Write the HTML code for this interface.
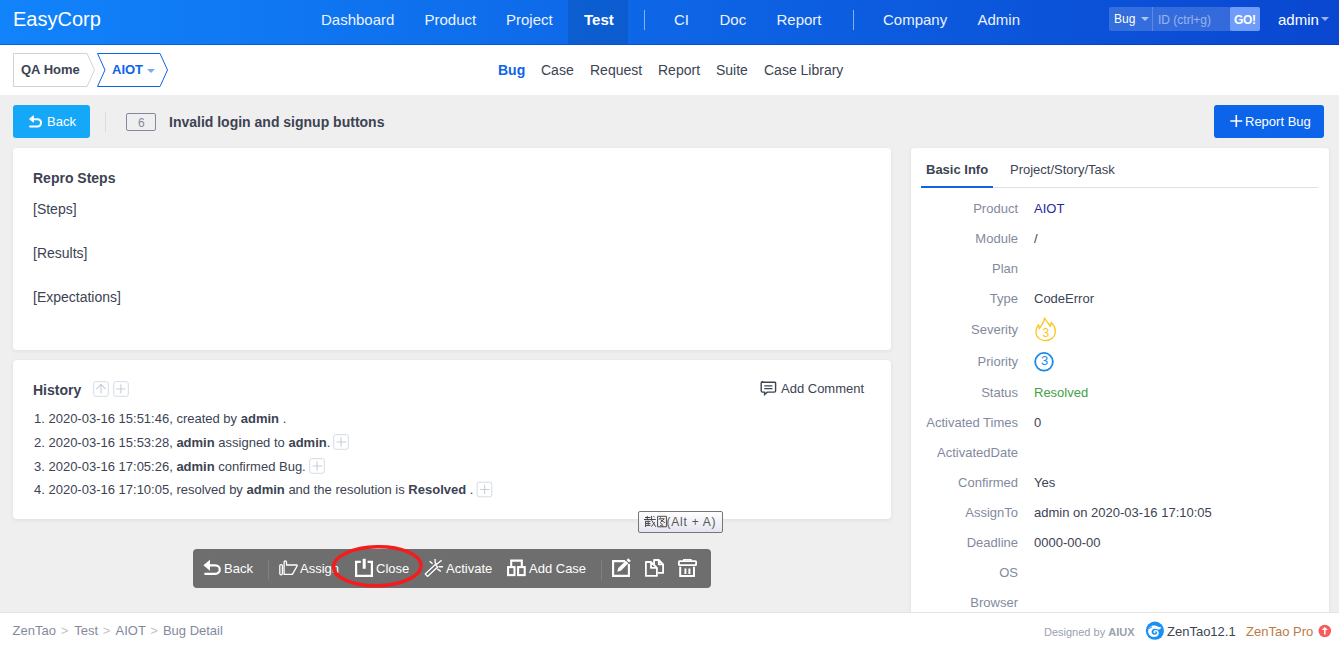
<!DOCTYPE html>
<html><head><meta charset="utf-8">
<style>
*{margin:0;padding:0;box-sizing:border-box}
html,body{width:1339px;height:649px;overflow:hidden;background:#efefef;font-family:"Liberation Sans",sans-serif;color:#3c4353;font-size:13px}
.a{position:absolute;white-space:nowrap;line-height:20px}
#hd{position:absolute;left:0;top:0;width:1339px;height:45px;background:linear-gradient(90deg,#1183fb 0%,#0a47d0 100%);border-bottom:1px solid rgba(0,40,180,.35)}
#hd .n{color:#fff;font-size:15px;opacity:.92}
#sub{position:absolute;left:0;top:45px;width:1339px;height:50px;background:#fff}
.panel{position:absolute;background:#fff;border-radius:4px;box-shadow:0 1px 4px rgba(0,0,0,.07)}
.lbl{color:#838a9d;text-align:right;width:110px;left:908px}
.val{left:1034px;color:#3c4353}
b{font-weight:bold}
</style></head><body>

<div id="hd">
  <div class="a" style="left:13px;top:7px;font-size:20px;line-height:24px;color:#fff">EasyCorp</div>
  <div style="position:absolute;left:568px;top:0;width:60px;height:44px;background:rgba(0,0,0,.1)"></div>
  <div class="a n" style="left:321px;top:10px">Dashboard</div>
  <div class="a n" style="left:424.5px;top:10px">Product</div>
  <div class="a n" style="left:506px;top:10px">Project</div>
  <div class="a" style="left:584px;top:10px;font-size:15px;font-weight:bold;color:#fff">Test</div>
  <div style="position:absolute;left:644px;top:10px;width:1px;height:20px;background:rgba(255,255,255,.5)"></div>
  <div class="a n" style="left:674px;top:10px">CI</div>
  <div class="a n" style="left:719.5px;top:10px">Doc</div>
  <div class="a n" style="left:776.5px;top:10px">Report</div>
  <div style="position:absolute;left:853px;top:10px;width:1px;height:20px;background:rgba(255,255,255,.5)"></div>
  <div class="a n" style="left:883px;top:10px">Company</div>
  <div class="a n" style="left:977.5px;top:10px">Admin</div>
  <!-- search -->
  <div style="position:absolute;left:1109px;top:7px;width:151px;height:24px;background:rgba(255,255,255,.17);border-radius:2px"></div>
  <div class="a" style="left:1114px;top:9px;font-size:12px;color:#fff">Bug</div>
  <div style="position:absolute;left:1141px;top:17px;width:0;height:0;border-left:4px solid transparent;border-right:4px solid transparent;border-top:4px solid rgba(255,255,255,.6)"></div>
  <div style="position:absolute;left:1152px;top:7px;width:1px;height:24px;background:rgba(255,255,255,.2)"></div>
  <div class="a" style="left:1158px;top:10px;font-size:12px;color:rgba(255,255,255,.5)">ID (ctrl+g)</div>
  <div style="position:absolute;left:1230px;top:7px;width:30px;height:24px;background:#6f9cf9;border-radius:2px"></div>
  <div class="a" style="left:1234px;top:10px;font-size:12px;font-weight:bold;color:#fff;letter-spacing:-.3px">GO!</div>
  <div class="a" style="left:1278px;top:10px;font-size:15px;color:#fff">admin</div>
  <div style="position:absolute;left:1321px;top:17px;width:0;height:0;border-left:4px solid transparent;border-right:4px solid transparent;border-top:4px solid rgba(255,255,255,.6)"></div>
</div>

<div id="sub">
  <svg style="position:absolute;left:0;top:0" width="180" height="50">
    <path d="M13.5 8.5 H87 L94.5 25 L87 41.5 H13.5 Z" fill="#fff" stroke="#cfd3dc" stroke-width="1"/>
    <path d="M97.5 8.5 H160 L167.5 25 L160 41.5 H97.5 L105 25 Z" fill="#fff" stroke="#0c64eb" stroke-width="1"/>
  </svg>
  <div class="a" style="left:21px;top:15px;font-weight:bold">QA Home</div>
  <div class="a" style="left:112px;top:15px;font-weight:bold;color:#0c64eb">AIOT</div>
  <div style="position:absolute;left:147px;top:24px;width:0;height:0;border-left:4px solid transparent;border-right:4px solid transparent;border-top:4px solid #7fa8f0"></div>
  <div class="a" style="left:498px;top:15px;font-size:14px;font-weight:bold;color:#0c64eb">Bug</div>
  <div class="a" style="left:541px;top:15px;font-size:14px">Case</div>
  <div class="a" style="left:590px;top:15px;font-size:14px">Request</div>
  <div class="a" style="left:658px;top:15px;font-size:14px">Report</div>
  <div class="a" style="left:716px;top:15px;font-size:14px">Suite</div>
  <div class="a" style="left:764px;top:15px;font-size:14px">Case Library</div>
</div>

<!-- main toolbar -->
<div style="position:absolute;left:13px;top:105px;width:77px;height:33px;background:#16a8f8;border-radius:3px"></div>
<div class="a" style="left:47px;top:112px;color:#fff">Back</div>
<div style="position:absolute;left:105px;top:112px;width:1px;height:20px;background:#dcdcdc"></div>
<div style="position:absolute;left:126px;top:113px;width:30px;height:18px;border:1px solid #838a9d;border-radius:2px"></div>
<div class="a" style="left:138px;top:113px;font-size:12px;color:#838a9d">6</div>
<div class="a" style="left:169px;top:112px;font-size:14px;font-weight:bold">Invalid login and signup buttons</div>

<div style="position:absolute;left:1214px;top:105px;width:110px;height:33px;background:#0c64eb;border-radius:3px"></div>
<div class="a" style="left:1245px;top:112px;color:#fff">Report Bug</div>

<!-- panel 1 -->
<div class="panel" style="left:13px;top:148px;width:878px;height:202px"></div>
<div class="a" style="left:33px;top:168px;font-size:14px;font-weight:bold">Repro Steps</div>
<div class="a" style="left:33px;top:199px;font-size:14px">[Steps]</div>
<div class="a" style="left:33px;top:243px;font-size:14px">[Results]</div>
<div class="a" style="left:33px;top:287px;font-size:14px">[Expectations]</div>

<!-- panel 2 -->
<div class="panel" style="left:13px;top:360px;width:878px;height:159px"></div>
<div class="a" style="left:33px;top:380px;font-size:14px;font-weight:bold">History</div>
<div class="a" style="left:781px;top:379px">Add Comment</div>
<div class="a" style="left:34px;top:409px">1. 2020-03-16 15:51:46, created by <b>admin</b> .</div>
<div class="a" style="left:34px;top:433px">2. 2020-03-16 15:53:28, <b>admin</b> assigned to <b>admin</b>.</div>
<div class="a" style="left:34px;top:457px">3. 2020-03-16 17:05:26, <b>admin</b> confirmed Bug.</div>
<div class="a" style="left:34px;top:480px">4. 2020-03-16 17:10:05, resolved by <b>admin</b> and the resolution is <b>Resolved</b> .</div>

<!-- right panel -->
<div class="panel" style="left:911px;top:148px;width:418px;height:470px"></div>
<div class="a" style="left:926px;top:160px;font-weight:bold">Basic Info</div>
<div class="a" style="left:1010px;top:160px">Project/Story/Task</div>
<div style="position:absolute;left:921px;top:187px;width:397px;height:1px;background:#dcdfe5"></div>
<div style="position:absolute;left:921px;top:186px;width:72px;height:2px;background:#0c64eb"></div>

<div class="a lbl" style="top:199px">Product</div><div class="a val" style="top:199px;color:#1f2a9a">AIOT</div>
<div class="a lbl" style="top:229px">Module</div><div class="a val" style="top:229px">/</div>
<div class="a lbl" style="top:259px">Plan</div>
<div class="a lbl" style="top:289px">Type</div><div class="a val" style="top:289px">CodeError</div>
<div class="a lbl" style="top:320px">Severity</div>
<div class="a lbl" style="top:352px">Priority</div>
<div class="a lbl" style="top:383px">Status</div><div class="a val" style="top:383px;color:#43a047">Resolved</div>
<div class="a lbl" style="top:413px">Activated Times</div><div class="a val" style="top:413px">0</div>
<div class="a lbl" style="top:443px">ActivatedDate</div>
<div class="a lbl" style="top:473px">Confirmed</div><div class="a val" style="top:473px">Yes</div>
<div class="a lbl" style="top:503px">AssignTo</div><div class="a val" style="top:503px">admin on 2020-03-16 17:10:05</div>
<div class="a lbl" style="top:533px">Deadline</div><div class="a val" style="top:533px">0000-00-00</div>
<div class="a lbl" style="top:563px">OS</div>
<div class="a lbl" style="top:593px">Browser</div>

<!-- action toolbar -->
<div style="position:absolute;left:193px;top:549px;width:518px;height:39px;background:#6e6e6e;border-radius:4px"></div>
<div class="a" style="left:224px;top:559px;color:#fff">Back</div>
<div class="a" style="left:300px;top:559px;color:#fff">Assign</div>
<div class="a" style="left:376px;top:559px;color:#fff">Close</div>
<div class="a" style="left:446px;top:559px;color:#fff">Activate</div>
<div class="a" style="left:529px;top:559px;color:#fff">Add Case</div>


<div style="position:absolute;left:0;top:612px;width:1339px;height:37px;background:#fff;border-top:1px solid #e5e5e5"></div>
<!-- icons -->
<svg style="position:absolute;left:0;top:0;pointer-events:none" width="1339" height="649">
  <!-- back btn icon -->
  <g fill="#fff" stroke="#fff">
    <path d="M28.9 119 L33.8 115.1 L33.8 123 Z" stroke="none"/>
    <path d="M33 119.2 H37.4 A3.65 3.65 0 0 1 37.4 126.5 H30.1" fill="none" stroke-width="2.1" stroke-linecap="round"/>
  </g>
  <!-- report bug plus -->
  <path d="M1236.3 115 V127 M1230.3 121 H1242.3" stroke="#fff" stroke-width="1.6"/>
  <!-- history box icons -->
  <rect x="93.7" y="381.7" width="14.6" height="14.6" rx="2" fill="none" stroke="#d5dbe6"/>
  <path d="M101 384.4 V393.6 M96.3 389.1 L101 384.4 L105.7 389.1" fill="none" stroke="#c6cedc" stroke-width="1.1"/>
  <rect x="113.7" y="381.7" width="14.6" height="14.6" rx="2" fill="none" stroke="#d5dbe6"/>
  <path d="M120.9 384.4 V393.6 M116.2 389 H125.6" fill="none" stroke="#c6cedc" stroke-width="1.1"/>
  <rect x="333.7" y="434.7" width="14.6" height="14.6" rx="2" fill="none" stroke="#d5dbe6"/>
  <path d="M341.1 437.2 V446.6 M336.6 442 H346" fill="none" stroke="#c6cedc" stroke-width="1.1"/>
  <rect x="309.7" y="458.7" width="14.6" height="14.6" rx="2" fill="none" stroke="#d5dbe6"/>
  <path d="M317.1 461.2 V470.6 M312.6 466 H322" fill="none" stroke="#c6cedc" stroke-width="1.1"/>
  <rect x="477.2" y="482.2" width="14.6" height="14.6" rx="2" fill="none" stroke="#d5dbe6"/>
  <path d="M484.6 484.7 V494.1 M480.1 489.5 H489.5" fill="none" stroke="#c6cedc" stroke-width="1.1"/>
  <!-- comment icon -->
  <g fill="none" stroke="#3c4353">
    <path d="M762.5 382.3 H774.3 Q775.6 381.8 775.6 383.1 V390.8 Q775.6 392.1 774.3 392.1 H767.3 L764.6 394.4 V392.1 H762.5 Q761.2 392.1 761.2 390.8 V383.1 Q761.2 381.8 762.5 381.8 Z" stroke-width="1.4"/>
    <path d="M764.3 385.9 H772.4 M764.3 388.7 H772.4" stroke-width="1.3"/>
  </g>
  <!-- severity flame -->
  <path d="M1044.6 317.9 C1045.8 321.2 1048.8 323.2 1050.4 326.5 L1051.2 322.5 C1053.8 325 1055.4 327.8 1055.4 331.8 C1055.4 336.8 1051 340.6 1045.5 340.6 C1040 340.6 1035.9 336.8 1035.9 332.3 C1035.9 329 1037 326.5 1038.6 324.6 L1039.3 328.6 C1041.8 325.2 1044 322.4 1044.6 317.9 Z" fill="none" stroke="#fcc41e" stroke-width="1.3" stroke-linejoin="round"/>
  <!-- priority circle -->
  <circle cx="1044" cy="361.8" r="8.85" fill="none" stroke="#1a8ae8" stroke-width="1.8"/>
  <!-- toolbar icons -->
  <g fill="#fff" stroke="#fff">
    <path d="M203.4 565.2 L210 559.8 L210 570.8 Z" stroke="none"/>
    <path d="M209 565.3 H215.5 A4.25 4.25 0 0 1 215.5 573.8 H205.2" fill="none" stroke-width="2.2" stroke-linecap="round"/>
    <!-- assign hand -->
    <rect x="279.8" y="564.6" width="2.6" height="10.2" rx="1.2" fill="none" stroke-width="1.3"/>
    <path d="M284.1 574.4 V561.9 Q284.1 560.9 285.3 560.9 Q286.5 560.9 286.5 561.9 V565 H296.6 Q297.6 565 297.1 566 L292.4 574.4 Z" fill="none" stroke-width="1.3" stroke-linejoin="round"/>
    <!-- close power -->
    <path d="M360.8 561.9 H356.1 V575.8 H371.9 V561.9 H367.6" fill="none" stroke-width="2.2"/>
    <path d="M364.2 558.8 V568.8" fill="none" stroke-width="3"/>
    <!-- activate wand -->
    <path d="M425.2 574 L435.3 564.6 L437.6 567 L427.5 576.4 Z" fill="none" stroke-width="1.3" stroke-linejoin="round"/>
    <path d="M435 562.6 L437.2 564.8 M435.1 559 V562.6 M429.6 561.2 L432.6 563.8 M437.3 563.8 L441.6 560.2 M438.6 566.8 H443 M437.2 568.8 L440.8 571.4" fill="none" stroke-width="1.4"/>
    <!-- add case sitemap -->
    <path d="M511.2 566 V560.6 H521.8 V566" fill="none" stroke-width="2.1"/>
    <rect x="508.1" y="567.1" width="6.4" height="8" fill="none" stroke-width="2.1"/>
    <rect x="518.1" y="567.1" width="6.6" height="8" fill="none" stroke-width="2.1"/>
    <!-- edit -->
    <path d="M625 561.1 H613.1 V575.9 H628.9 V564" fill="none" stroke-width="2.1"/>
    <path d="M617.2 571.8 L618.3 568.1 L625.8 560.7 L628.3 563.2 L620.9 570.7 Z" stroke="none"/>
    <path d="M626.5 559.9 L628.2 558.2 L630.8 560.8 L629.1 562.5 Z" stroke="none"/>
    <!-- copy -->
    <path d="M645.9 562 H651 L656.9 567.9 V575.9 H645.9 Z M651 562 V567.9 H656.9" fill="none" stroke-width="1.8" stroke-linejoin="round"/>
    <path d="M654.1 565.2 V560 H658.8 L663.1 564.3 V572.9 H657.8 M658.8 560 V564.3 H663.1" fill="none" stroke-width="1.8" stroke-linejoin="round"/>
    <!-- delete -->
    <rect x="678.9" y="561.1" width="17.2" height="4.1" rx="0.6" fill="none" stroke-width="1.8"/>
    <path d="M683.9 561 V559.7 H690.9 V561" fill="none" stroke-width="1.6"/>
    <path d="M680.2 566.8 V575.9 H694 V566.8" fill="none" stroke-width="2"/>
    <path d="M685.4 568.4 V574 M689.4 568.4 V574" fill="none" stroke-width="2"/>
  </g>
  <!-- separators -->
  <path d="M268.5 560 V580 M601.5 560 V580" stroke="#808080" stroke-width="1"/>
  <!-- red ellipse -->
  <ellipse cx="377.3" cy="566.2" rx="43.8" ry="19.5" fill="none" stroke="#f41c1c" stroke-width="3.5" transform="rotate(-1.2 377.3 566.2)"/>
  <!-- footer logos -->
  <circle cx="1154.9" cy="630.7" r="9.1" fill="#1a8ff4"/>
  <path d="M1148.2 630.5 C1148.6 627.4 1151.5 624.8 1155.2 625.6 C1157.4 626.1 1158.6 627.6 1161.4 627.2 C1160.6 629.2 1158.6 629.8 1157.2 629.3 C1155.5 628.3 1153.2 628.6 1152.1 630.2 C1150.9 632.3 1152.1 634.6 1154.5 634.8 C1156.5 635 1157.7 633.4 1157 632.1 C1156.4 631 1155 631.2 1154.8 632 C1155.8 632 1155.9 633.2 1155 633.3 C1153.8 633.5 1153.2 632.2 1153.6 631.2 C1154.4 629.8 1156.6 629.7 1157.8 630.7 C1159.5 632.2 1158.9 635.6 1156.3 636.6 C1152.8 637.9 1148.9 635.9 1148.2 632.5 Z" fill="#fff"/>
  <path d="M1149.5 629 C1150 627.6 1150.8 627 1152 627.2" fill="none" stroke="#1a8ff4" stroke-width="1"/>
  <circle cx="1324.8" cy="631" r="6.25" fill="#fa5a5a"/>
  <path d="M1324.8 626.9 L1327.9 629.9 H1325.6 V634.6 H1324 V629.9 H1321.7 Z" fill="#fff"/>
</svg>

<!-- footer -->

<div class="a" style="left:12.6px;top:621px;color:#838a9d">ZenTao</div>
<div class="a" style="left:60.8px;top:621px;color:#c4c4c4">&gt;</div>
<div class="a" style="left:74.2px;top:621px;color:#838a9d">Test</div>
<div class="a" style="left:102.7px;top:621px;color:#c4c4c4">&gt;</div>
<div class="a" style="left:115.5px;top:621px;color:#838a9d">AIOT</div>
<div class="a" style="left:150.2px;top:621px;color:#c4c4c4">&gt;</div>
<div class="a" style="left:162.9px;top:621px;color:#838a9d">Bug Detail</div>
<div class="a" style="left:1044px;top:622px;font-size:11px;color:#9aa0ae">Designed by <b>AIUX</b></div>
<div class="a" style="left:1167px;top:622px;color:#3c4353">ZenTao12.1</div>
<div class="a" style="left:1246px;top:622px;color:#b97c48">ZenTao Pro</div>
<div class="a" style="left:1041px;top:351px;color:#1a8ae8">3</div>
<div class="a" style="left:1042.5px;top:323px;font-size:12px;color:#fcc21e">3</div>
<div style="position:absolute;left:638px;top:511px;width:85px;height:22px;border:1px solid #767676;border-radius:2px;background:linear-gradient(#fff,#e4e5f0)"></div>
<div class="a" style="left:666.6px;top:512px;font-size:12px;color:#575757;letter-spacing:.75px">(Alt + A)</div>
<svg style="position:absolute;left:0;top:0" width="680" height="540"><g fill="none" stroke="#4a4a4a" stroke-width="1">
<path d="M645 517.5 H650.5 M644 519.5 H655.8 M647.3 516 V519.5 M651.6 515.8 V519.5 M645.6 520.8 V527 M645.6 521.3 H650.5 M645.6 523.4 H650.5 M645.6 525.4 H650.5 M648.2 520.8 V525.4 M651.6 520.2 L655.8 526.8 M654.8 522.2 L651.4 526.6 M653.4 516.1 L654.6 517.3"/>
<path d="M657.6 526.8 V516.3 H666.4 V526.8 H657.6 M660.6 517.4 L659 519.7 M659.8 518.8 H664.3 L660.2 522.6 M660.8 520 L664.9 522.7 M660.6 523.6 L662.8 524.4 M660.2 525.5 L663.6 526.2" stroke-width="1"/>
</g></svg>


</body></html>
